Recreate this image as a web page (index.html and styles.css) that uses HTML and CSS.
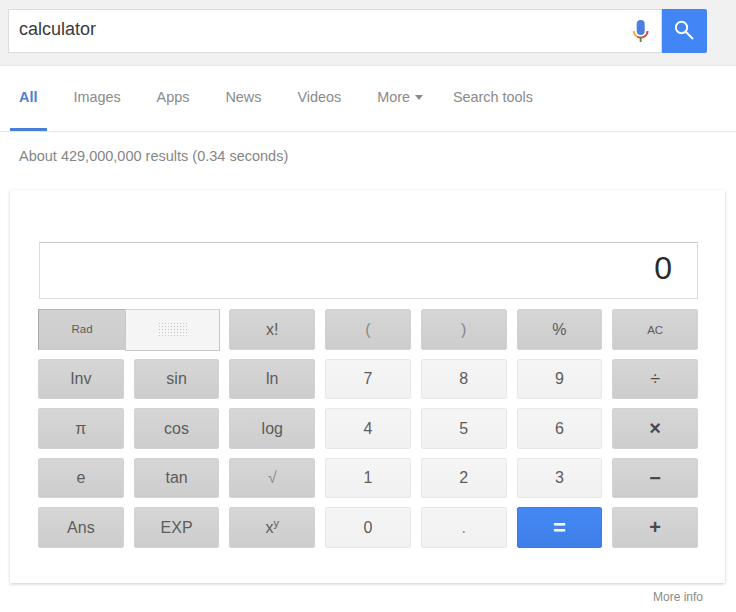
FILE: index.html
```html
<!DOCTYPE html>
<html lang="en">
<head>
<meta charset="utf-8">
<title>calculator</title>
<link rel="stylesheet" href="styles.css">
</head>
<body>
<header class="top">
  <div class="search">
    <div class="query">calculator</div>
    <svg class="mic" width="18" height="24" viewBox="0 0 18 24">
      <path d="M1.8 12a7 7 0 0 0 3.4 5.6" fill="none" stroke="#eab53c" stroke-width="2"/>
      <path d="M5.2 17.6a7 7 0 0 0 7 0a7 7 0 0 0 3.4-5.6" fill="none" stroke="#d0523f" stroke-width="2"/>
      <rect x="4.7" y="1" width="8" height="15" rx="4" fill="#4a80e0"/>
      <rect x="7.7" y="19" width="2" height="4" fill="#5f8f5a"/>
    </svg>
    <button class="go" aria-label="Search">
      <svg width="20" height="20" viewBox="0 0 20 20">
        <circle cx="7.5" cy="7.5" r="5.7" fill="none" stroke="#fff" stroke-width="1.9"/>
        <path d="M11.8 11.8L19 19" stroke="#fff" stroke-width="2" fill="none"/>
      </svg>
    </button>
  </div>
</header>
<nav class="tabs">
  <a class="tab active">All</a>
  <a class="tab">Images</a>
  <a class="tab">Apps</a>
  <a class="tab">News</a>
  <a class="tab">Videos</a>
  <a class="tab more">More<span class="caret"></span></a>
  <a class="tab">Search tools</a>
</nav>
<p class="stats">About 429,000,000 results (0.34 seconds)</p>
<main class="card">
  <div class="display">0</div>
  <div class="keys">
    <div class="toggle">
      <div class="rad">Rad</div>
      <div class="deg"><span class="dots"></span></div>
    </div>
    <button class="key dark">x!</button>
    <button class="key dark faint">(</button>
    <button class="key dark faint">)</button>
    <button class="key dark">%</button>
    <button class="key dark small">AC</button>
    <button class="key dark">Inv</button>
    <button class="key dark">sin</button>
    <button class="key dark">ln</button>
    <button class="key light">7</button>
    <button class="key light">8</button>
    <button class="key light">9</button>
    <button class="key dark divide">÷</button>
    <button class="key dark">π</button>
    <button class="key dark">cos</button>
    <button class="key dark">log</button>
    <button class="key light">4</button>
    <button class="key light">5</button>
    <button class="key light">6</button>
    <button class="key dark bold">×</button>
    <button class="key dark">e</button>
    <button class="key dark">tan</button>
    <button class="key dark faint">√</button>
    <button class="key light">1</button>
    <button class="key light">2</button>
    <button class="key light">3</button>
    <button class="key dark bold">−</button>
    <button class="key dark">Ans</button>
    <button class="key dark">EXP</button>
    <button class="key dark">x<sup>y</sup></button>
    <button class="key light">0</button>
    <button class="key light faint">.</button>
    <button class="key blue">=</button>
    <button class="key dark bold">+</button>
  </div>
</main>
<footer class="foot"><a class="info">More info</a></footer>
</body>
</html>
```
FILE: styles.css
```css
* { box-sizing: border-box; }
html, body { margin: 0; padding: 0; }
body {
  width: 736px;
  height: 612px;
  overflow: hidden;
  background: #fff;
  font-family: "Liberation Sans", Arial, sans-serif;
  color: #444;
}
.top {
  height: 66px;
  padding: 9px 0 0 8px;
  background: #f1f1f1;
  border-bottom: 1px solid #e4e4e4;
}
.search {
  display: flex;
  align-items: flex-start;
  width: 699px;
}
.query {
  flex: 1;
  height: 44px;
  padding: 0 0 0 10px;
  line-height: 38px;
  font-size: 18px;
  color: #3a3a3a;
  background: #fff;
  border: 1px solid #dcdcdc;
}
.mic {
  position: absolute;
  left: 632px;
  top: 19px;
}
.go {
  width: 45px;
  height: 44px;
  padding: 0 2px 2px 0;
  border: 0;
  border-radius: 0 2px 2px 0;
  background: #4285f4;
  display: flex;
  align-items: center;
  justify-content: center;
}
.tabs {
  display: flex;
  height: 66px;
  padding: 0 0 0 10px;
  border-bottom: 1px solid #e8e8e8;
  font-size: 14.4px;
}
.tab {
  color: #8a8a8a;
  padding: 23px 9px 0;
  height: 65px;
  margin-right: 18px;
}
.tab.active {
  color: #4a7fd6;
  font-weight: bold;
  border-bottom: 3px solid #4a7fd6;
  padding-right: 10px;
  margin-right: 17px;
}
.tab.more { margin-right: 12px; }
.caret {
  display: inline-block;
  margin: 0 0 2px 5px;
  border: 4px solid transparent;
  border-top: 5px solid #8a8a8a;
  border-bottom: 0;
}
.stats {
  margin: 0;
  padding: 16px 0 0 19px;
  height: 58px;
  font-size: 14.5px;
  color: #868686;
}
.card {
  width: 715px;
  height: 393px;
  margin-left: 10px;
  padding: 52px 27px 0 28px;
  background: #fff;
  box-shadow: 0 1px 3px rgba(0,0,0,.2);
}
.display {
  height: 57px;
  margin-left: 1px;
  padding-right: 25px;
  border: 1px solid #dcdcdc;
  border-top-color: #c8c8c8;
  text-align: right;
  font-size: 32px;
  line-height: 50px;
  color: #2a2a2a;
}
.keys {
  display: grid;
  grid-template-columns: repeat(7, 1fr);
  grid-template-rows: repeat(5, 40.5px);
  column-gap: 10px;
  row-gap: 9px;
  margin-top: 10px;
}
.key {
  padding: 1px 0 0;
  border-radius: 2px;
  font-family: inherit;
  font-size: 16px;
  color: #5c5c5c;
}
.key sup { font-size: 11px; line-height: 0; }
.dark {
  border: 1px solid #d2d2d2;
  background: linear-gradient(#d6d6d6, #cdcdcd);
}
.light {
  border: 1px solid #e8e8e8;
  background: linear-gradient(#f5f5f5, #f1f1f1);
}
.blue {
  border: 1px solid #3f7be0;
  background: linear-gradient(#4488f5, #3f7ee8);
  color: #fff;
  font-size: 22px;
  font-weight: bold;
}
.faint { color: #888; }
.small { font-size: 11.5px; }
.divide { font-size: 18px; color: #4a4a4a; }
.bold { font-size: 20px; font-weight: bold; color: #4a4a4a; }
.toggle {
  grid-column: span 2;
  display: flex;
  margin-right: -1px;
}
.rad {
  width: 87px;
  font-size: 11.5px;
  line-height: 38px;
  text-align: center;
  color: #5c5c5c;
  background: linear-gradient(#d2d2d2, #cdcdcd);
  border: 1px solid #cacaca;
  border-left-color: #a8a8a8;
  border-top-color: #b4b4b4;
  border-right: 0;
}
.deg {
  flex: 1;
  display: flex;
  align-items: center;
  justify-content: center;
  height: 42px;
  background: #f5f5f5;
  border: 1px solid #c8c8c8;
  border-top-color: #d4d4d4;
}
.dots {
  width: 30px;
  height: 15px;
  margin-top: -2px;
  background-image: radial-gradient(circle, #c6c6c6 .7px, transparent 1px);
  background-size: 3px 3px;
}
.foot {
  padding: 7px 33px 0 0;
  text-align: right;
  font-size: 12px;
  color: #8a8a8a;
}
```
